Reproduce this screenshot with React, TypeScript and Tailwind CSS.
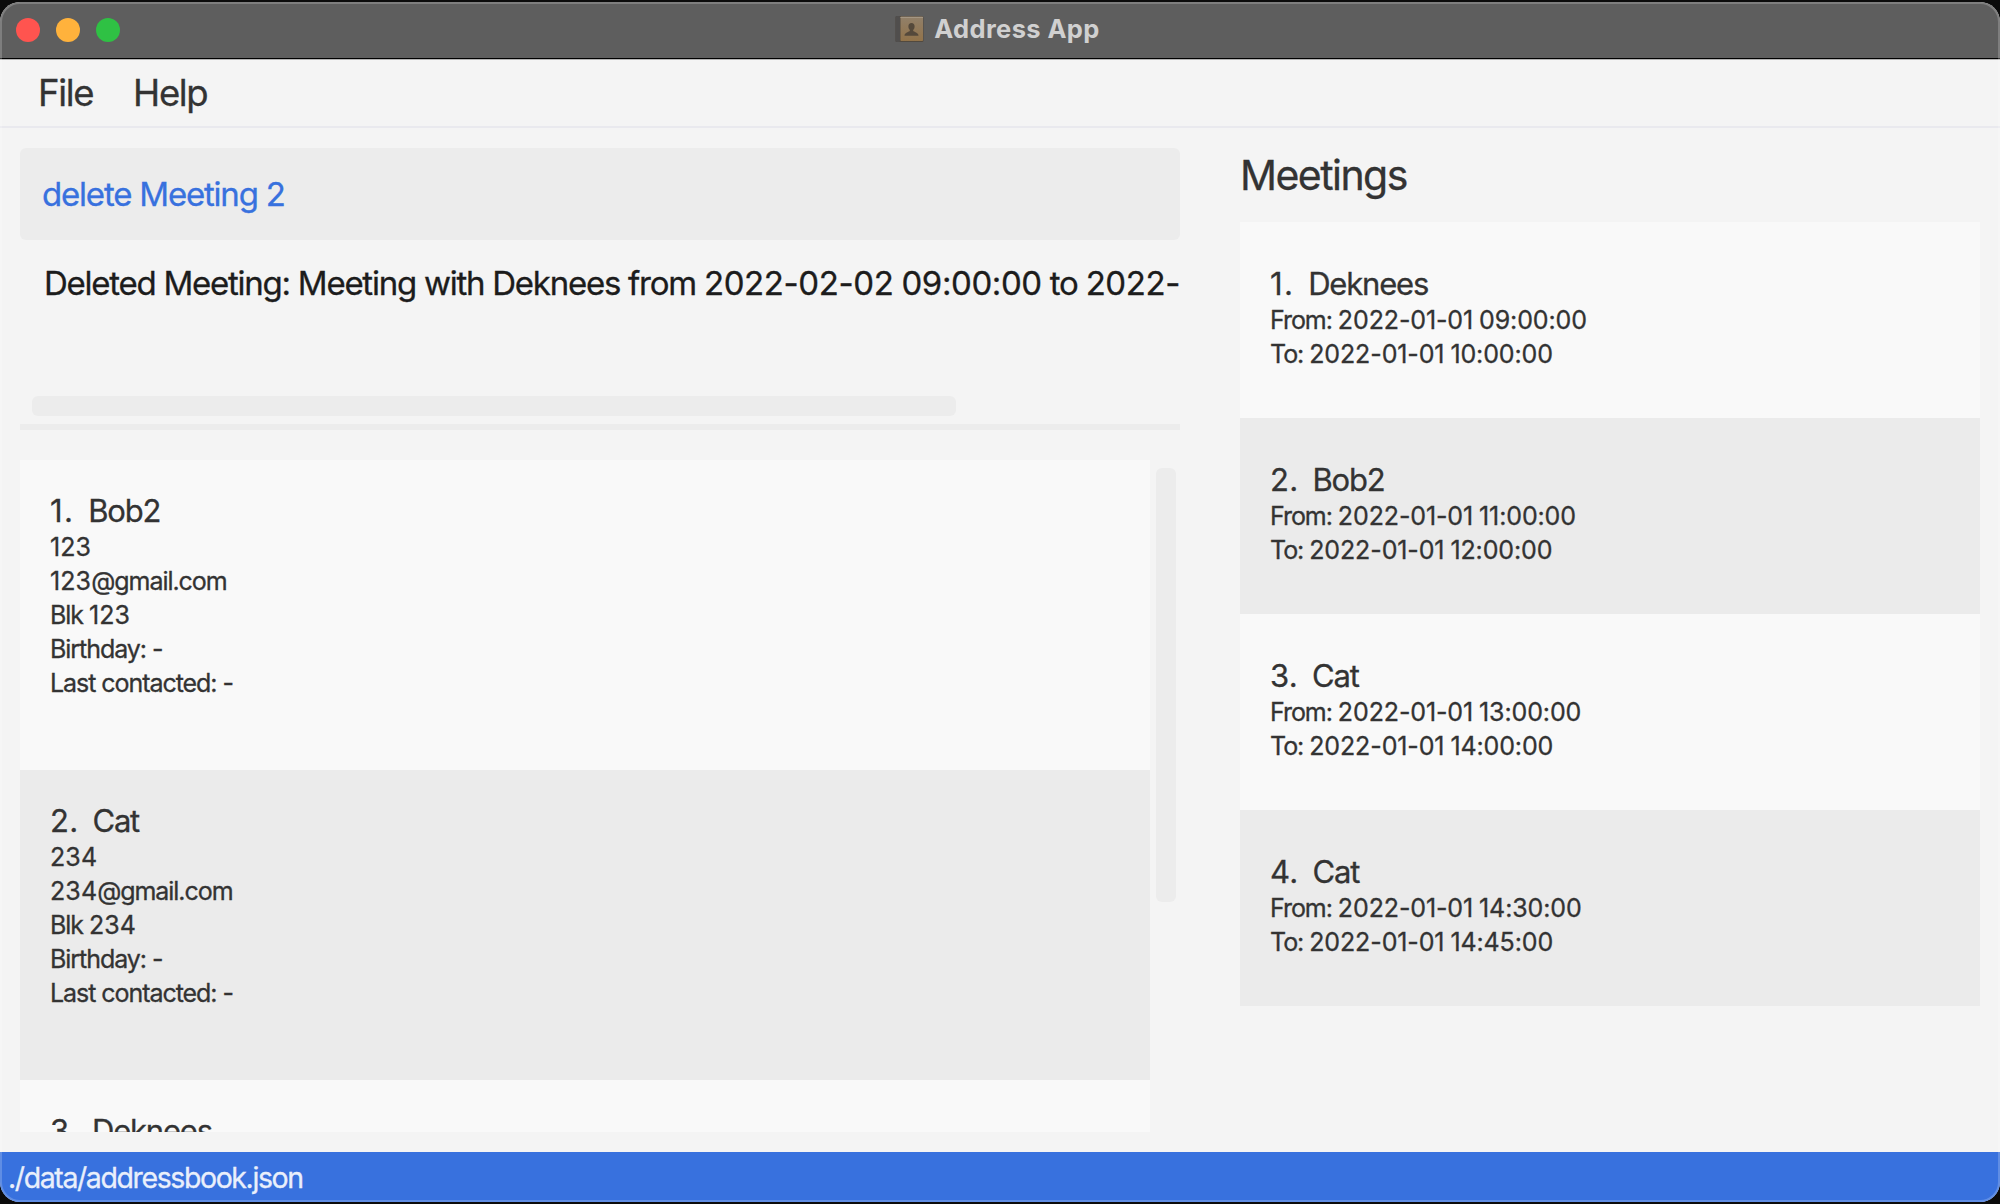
import React from "react";

type Person = { name: string; details: string[] };
type Meeting = { name: string; from: string; to: string };

const people: Person[] = [
  { name: "Bob2", details: ["123", "123@gmail.com", "Blk 123", "Birthday: -", "Last contacted: -"] },
  { name: "Cat", details: ["234", "234@gmail.com", "Blk 234", "Birthday: -", "Last contacted: -"] },
  { name: "Deknees", details: [] },
];

const meetings: Meeting[] = [
  { name: "Deknees", from: "2022-01-01 09:00:00", to: "2022-01-01 10:00:00" },
  { name: "Bob2", from: "2022-01-01 11:00:00", to: "2022-01-01 12:00:00" },
  { name: "Cat", from: "2022-01-01 13:00:00", to: "2022-01-01 14:00:00" },
  { name: "Cat", from: "2022-01-01 14:30:00", to: "2022-01-01 14:45:00" },
];

function BookIcon() {
  return (
    <svg className="mr-[10px] h-[28px] w-[29px]" viewBox="0 0 29 28">
      <defs>
        <linearGradient id="cover" x1="0" y1="0" x2="0" y2="1">
          <stop offset="0" stopColor="#91806a" />
          <stop offset="1" stopColor="#92734a" />
        </linearGradient>
      </defs>
      <rect x="0.5" y="1" width="28" height="26" rx="1.5" fill="#51493f" />
      <rect x="0.5" y="1" width="4.5" height="26" rx="1" fill="#504e4d" />
      <rect x="5.5" y="1.5" width="22.5" height="24.5" rx="0.8" fill="url(#cover)" />
      <rect x="5.5" y="2" width="22.5" height="1" fill="#a49683" />
      <path
        d="M16.5 8c-2 0-3.100 1.400-3.100 3.400 0 1.500.6 2.700 1.400 3.500v1.200c-.5.8-5.300 1.300-5.300 4.700h14c0-3.400-4.800-3.900-5.300-4.700v-1.200c.8-.8 1.400-2 1.400-3.500 0-2-1.100-3.400-3.100-3.400z"
        fill="#55493b"
      />
    </svg>
  );
}

function Heading({ index, name }: { index: number; name: string }) {
  return (
    <div className="flex h-[38px] gap-[14px] text-[31px] leading-[38px]">
      <span className={index === 1 ? "tracking-[1.3px]" : "tracking-[0.3px]"}>{index}.</span>
      <span className="tracking-[-1.2px]">{name}</span>
    </div>
  );
}

/** Sets dates and numbers with their own letter spacing, looser than the words around them. */
function Spaced({ text, words, dates }: { text: string; words: string; dates: string }) {
  return (
    <>
      {text.split(/(\d[\d:-]*)/).map((part, i) => (
        <span key={i} className={!/^\d/.test(part) ? words : part.length > 3 ? dates : "tracking-[0.1px]"}>
          {part}
        </span>
      ))}
    </>
  );
}

function Line({ text }: { text: string }) {
  return (
    <div className="h-[34px] text-[25px] leading-[34px] whitespace-pre">
      <Spaced text={text} words="tracking-[-1.05px]" dates="tracking-[-0.12px]" />
    </div>
  );
}

export default function App() {
  return (
    <div className="h-[1204px] w-[2000px] bg-[#0b0b0b] py-[2px] font-['Inter','Liberation_Sans',sans-serif] text-[#333333] [-webkit-text-stroke:0.3px]">
      <div className="relative flex h-[1200px] flex-col overflow-hidden rounded-[20px] bg-[#f4f4f4]">
        <header className="relative flex h-[57px] shrink-0 items-center justify-center bg-[#5e5e5e] pb-[3px] shadow-[inset_0_-1px_0_#000000]">
          <div className="absolute top-[16px] left-[16px] flex gap-4">
            <i className="size-6 rounded-full bg-[#ff544f]" />
            <i className="size-6 rounded-full bg-[#ffb23c]" />
            <i className="size-6 rounded-full bg-[#2fc144]" />
          </div>
          <div className="mr-[5px] flex items-center">
            <BookIcon />
            <h1 className="text-[25.5px] leading-8 font-bold tracking-[0.38px] text-[#d0d0d0] [-webkit-text-stroke:0px]">
              Address App
            </h1>
          </div>
        </header>

        <nav className="flex h-[69px] shrink-0 items-center gap-[40px] border-t border-b-2 border-t-[#b5b5b5] border-b-[#e9e9ee] pl-[38px] text-[36.5px] leading-[44px] tracking-[-1.35px]">
          <span>File</span>
          <span>Help</span>
        </nav>

        <main className="flex min-h-0 flex-1 px-5">
          <section className="flex w-[1160px] shrink-0 flex-col pt-5">
            <div className="flex h-[92px] shrink-0 items-center rounded-[6px] bg-[#ececec] pb-px pl-[22px] text-[33px] leading-[44px] tracking-[-1.2px] text-[#3871de]">
              delete Meeting 2
            </div>
            <div className="mt-[22px] h-[44px] shrink-0 overflow-hidden pl-[24px] text-[33px] leading-[43px] whitespace-nowrap text-[#1c1c1c]">
              <Spaced
                text="Deleted Meeting: Meeting with Deknees from 2022-02-02 09:00:00 to 2022-"
                words="tracking-[-1.25px]"
                dates="tracking-[-0.4px]"
              />
            </div>
            <div className="mt-[90px] ml-3 h-5 w-[924px] shrink-0 rounded-[6px] bg-[#ececec]" />
            <div className="mt-2 h-[6px] shrink-0 bg-[#ececec]" />
            <div className="mt-[30px] flex h-[672px] shrink-0">
              <ul className="w-[1130px] overflow-hidden">
                {people.map((p, i) => (
                  <li key={p.name} className="h-[310px] bg-[#f9f9f9] pt-8 pl-[30px] even:bg-[#ebebeb]">
                    <Heading index={i + 1} name={p.name} />
                    {p.details.map((d) => (
                      <Line key={d} text={d} />
                    ))}
                  </li>
                ))}
              </ul>
              <div className="mt-2 ml-[6px] h-[434px] w-5 rounded-[6px] bg-[#ececec]" />
            </div>
          </section>

          <section className="ml-[60px] flex-1 pt-[22px]">
            <h2 className="h-[72px] text-[41px] leading-[50px] tracking-[-1.55px]">Meetings</h2>
            <ul>
              {meetings.map((m, i) => (
                <li key={m.from} className="h-[196px] bg-[#f9f9f9] pt-[43px] pl-[30px] even:bg-[#ebebeb]">
                  <Heading index={i + 1} name={m.name} />
                  <Line text={`From: ${m.from}`} />
                  <Line text={`To: ${m.to}`} />
                </li>
              ))}
            </ul>
          </section>
        </main>

        <footer className="flex h-[50px] shrink-0 items-center bg-[#3871de] pt-[2px] pl-[8px] text-[28.5px] leading-[36px] tracking-[-1.4px] text-[#e9effb]">
          ./data/addressbook.json
        </footer>
        <div className="pointer-events-none absolute inset-0 rounded-[20px] border-2 border-white/20" />
      </div>
    </div>
  );
}
